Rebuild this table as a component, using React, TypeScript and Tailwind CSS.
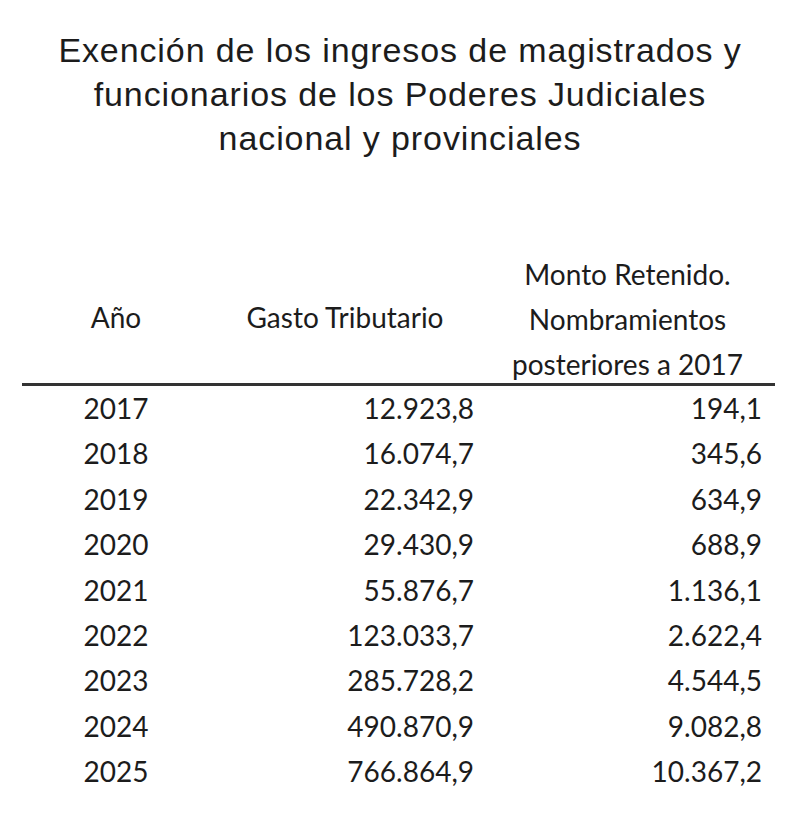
const rows = [
  { year: "2017", gasto: "12.923,8", monto: "194,1" },
  { year: "2018", gasto: "16.074,7", monto: "345,6" },
  { year: "2019", gasto: "22.342,9", monto: "634,9" },
  { year: "2020", gasto: "29.430,9", monto: "688,9" },
  { year: "2021", gasto: "55.876,7", monto: "1.136,1" },
  { year: "2022", gasto: "123.033,7", monto: "2.622,4" },
  { year: "2023", gasto: "285.728,2", monto: "4.544,5" },
  { year: "2024", gasto: "490.870,9", monto: "9.082,8" },
  { year: "2025", gasto: "766.864,9", monto: "10.367,2" },
];

export default function App() {
  return (
    <div className="w-[800px] h-[821px] bg-white text-[#1c1c1c]">
      <h1 className="pt-[28px] text-center font-['Liberation_Sans',Arial,sans-serif] text-[34px] leading-[44px] tracking-[0.9px] font-normal">
        Exención de los ingresos de magistrados y
        <br />
        funcionarios de los Poderes Judiciales
        <br />
        nacional y provinciales
      </h1>

      <div className="ml-[22px] mt-[92px] w-[753px] font-['Lato','Open_Sans',sans-serif] text-[28px]">
        {/* header */}
        <div className="grid grid-cols-[188px_270px_295px] items-center leading-[45px]">
          <div className="text-center">Año</div>
          <div className="text-center">Gasto Tributario</div>
          <div className="text-center -mb-[4px]">
            Monto Retenido.
            <br />
            Nombramientos
            <br />
            posteriores a 2017
          </div>
        </div>
        <div className="h-[3px] bg-[#333]" />
        <div>
          {rows.map((r) => (
            <div key={r.year} className="grid grid-cols-[188px_270px_295px] leading-[45.4px]">
              <div className="text-center">{r.year}</div>
              <div className="text-right pr-[6px]">{r.gasto}</div>
              <div className="text-right pr-[13px]">{r.monto}</div>
            </div>
          ))}
        </div>
      </div>
    </div>
  );
}
